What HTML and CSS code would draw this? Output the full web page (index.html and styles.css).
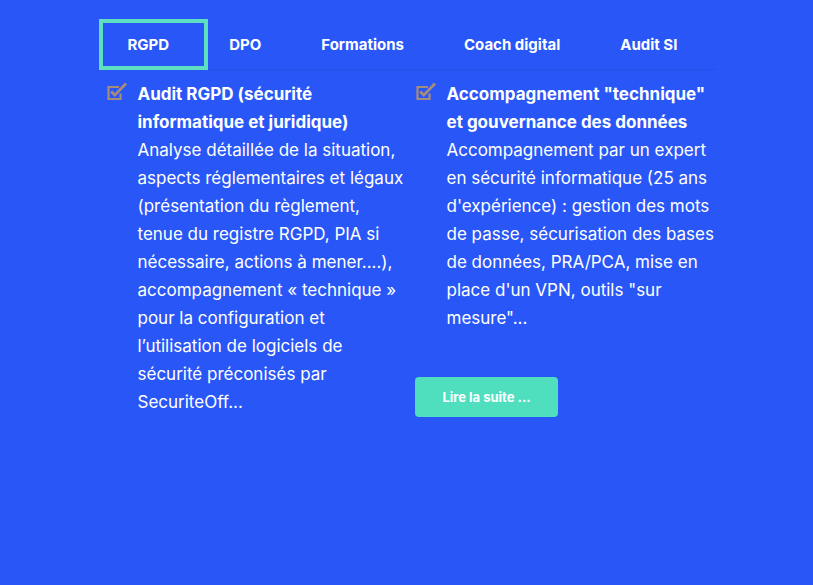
FILE: index.html
```html
<!DOCTYPE html>
<html lang="fr">
<head>
<meta charset="utf-8">
<title>RGPD</title>
<link rel="stylesheet" href="styles.css">
</head>
<body>
<div class="wrap">
  <ul class="tabs">
    <li class="tab active">RGPD</li>
    <li class="tab">DPO</li>
    <li class="tab">Formations</li>
    <li class="tab">Coach digital</li>
    <li class="tab">Audit SI</li>
  </ul>
  <div class="grid">
    <div class="col">
      <div class="item">
        <svg class="ico" width="24" height="22" viewBox="0 0 24 22"><path d="M12 7H1.5v12h12v-5.5" fill="none" stroke="#a88c7a" stroke-width="2.2"/><path d="M4.2 11.5l3.6 3.6L19 3.5" fill="none" stroke="#a88c7a" stroke-width="2.8"/></svg>
        <div class="txt">
          <h3 class="title">Audit RGPD (sécurité informatique et juridique)</h3>
          <p class="desc">Analyse détaillée de la situation, aspects réglementaires et légaux (présentation du règlement, tenue du registre RGPD, PIA si nécessaire, actions à mener....), accompagnement « technique » pour la configuration et l’utilisation de logiciels de sécurité préconisés par SecuriteOff...</p>
        </div>
      </div>
    </div>
    <div class="col">
      <div class="item">
        <svg class="ico" width="24" height="22" viewBox="0 0 24 22"><path d="M12 7H1.5v12h12v-5.5" fill="none" stroke="#a88c7a" stroke-width="2.2"/><path d="M4.2 11.5l3.6 3.6L19 3.5" fill="none" stroke="#a88c7a" stroke-width="2.8"/></svg>
        <div class="txt">
          <h3 class="title">Accompagnement "technique" et gouvernance des données</h3>
          <p class="desc">Accompagnement par un expert en sécurité informatique (25 ans d'expérience) : gestion des mots de passe, sécurisation des bases de données, PRA/PCA, mise en place d'un VPN, outils "sur mesure"...</p>
        </div>
      </div>
      <a class="btn" href="#">Lire la suite ...</a>
    </div>
  </div>
</div>
</body>
</html>
```

FILE: styles.css
```css
html, body {
  margin: 0;
  padding: 0;
  background: #2957f7;
  height: 100%;
}
body {
  font-family: Inter, "Noto Sans", sans-serif;
  color: #ffffff;
}
.wrap {
  width: 618px;
  margin: 0 auto;
  padding-top: 19px;
}
.tabs {
  list-style: none;
  margin: 0;
  padding: 0 0 0 1px;
  display: flex;
  border-bottom: 1px solid #2650e4;
}
.tab {
  box-sizing: border-box;
  height: 51px;
  line-height: 43px;
  border: 4px solid transparent;
  padding: 0 26px;
  margin-bottom: -1px;
  font-size: 15px;
  font-weight: 700;
  white-space: nowrap;
}
.tab.active {
  border-color: #5ddfc0;
  padding-left: 25px;
  padding-right: 35px;
  margin-right: -9px;
}
.grid {
  display: grid;
  grid-template-columns: 309px 309px;
  padding-top: 10px;
}
.item {
  display: flex;
  align-items: flex-start;
}
.ico {
  flex: none;
  margin-left: 9px;
  margin-top: 0;
  margin-right: 7px;
}
.txt {
  width: 269px;
}
.title {
  margin: 0;
  font-size: 17px;
  line-height: 28px;
  font-weight: 700;
}
.desc {
  margin: 0;
  font-size: 17px;
  line-height: 28px;
  font-weight: 400;
}
.btn {
  display: inline-block;
  margin-top: 45px;
  margin-left: 8.5px;
  width: 143px;
  height: 40px;
  line-height: 40px;
  border-radius: 4px;
  background: #4fdfbf;
  color: #ffffff;
  text-align: center;
  font-size: 13px;
  font-weight: 700;
  text-decoration: none;
}
```
